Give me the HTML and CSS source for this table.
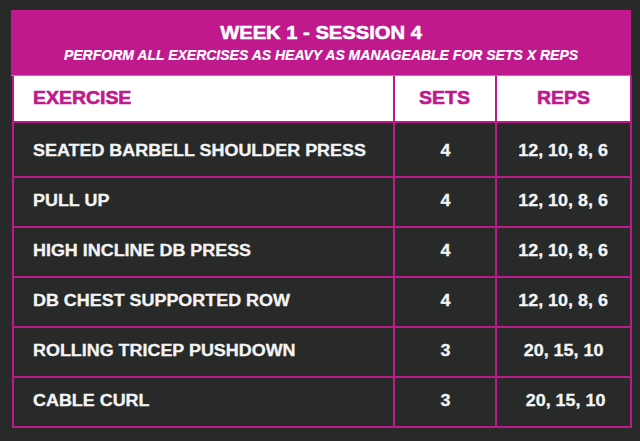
FILE: index.html
```html
<!DOCTYPE html>
<html lang="en">
<head>
<meta charset="utf-8">
<title>Week 1 - Session 4</title>
<link rel="stylesheet" href="styles.css">
</head>
<body>
<main class="sheet">
  <header class="banner">
    <h1 class="banner-title"><span class="wide">WEEK 1 - SESSION 4</span></h1>
    <p class="banner-sub">PERFORM ALL EXERCISES AS HEAVY AS MANAGEABLE FOR SETS X REPS</p>
  </header>
  <section class="grid">
    <div class="cell head left"><span class="wide">EXERCISE</span></div>
    <div class="cell head"><span class="wide">SETS</span></div>
    <div class="cell head"><span class="wide">REPS</span></div>

    <div class="cell body left first"><span class="wide">SEATED BARBELL SHOULDER PRESS</span></div>
    <div class="cell body first"><span class="wide">4</span></div>
    <div class="cell body first"><span class="wide">12, 10, 8, 6</span></div>

    <div class="cell body left"><span class="wide">PULL UP</span></div>
    <div class="cell body"><span class="wide">4</span></div>
    <div class="cell body"><span class="wide">12, 10, 8, 6</span></div>

    <div class="cell body left"><span class="wide">HIGH INCLINE DB PRESS</span></div>
    <div class="cell body"><span class="wide">4</span></div>
    <div class="cell body"><span class="wide">12, 10, 8, 6</span></div>

    <div class="cell body left"><span class="wide">DB CHEST SUPPORTED ROW</span></div>
    <div class="cell body"><span class="wide">4</span></div>
    <div class="cell body"><span class="wide">12, 10, 8, 6</span></div>

    <div class="cell body left"><span class="wide">ROLLING TRICEP PUSHDOWN</span></div>
    <div class="cell body"><span class="wide">3</span></div>
    <div class="cell body"><span class="wide">20, 15, 10</span></div>

    <div class="cell body left"><span class="wide">CABLE CURL</span></div>
    <div class="cell body"><span class="wide">3</span></div>
    <div class="cell body last-reps"><span class="wide">20, 15, 10</span></div>
  </section>
</main>
</body>
</html>
```
FILE: styles.css
```css
html, body {
  margin: 0;
  padding: 0;
}

body {
  background: #282929;
  width: 640px;
  height: 441px;
  overflow: hidden;
  font-family: "Liberation Sans", Arial, sans-serif;
  font-weight: bold;
}

.sheet {
  margin: 10px 0 0 11px;
  width: 621px;
}

.banner {
  box-sizing: border-box;
  width: 620px;
  height: 66px;
  background: #c0198e;
  border-bottom: 1px solid #8f8f8f;
  padding-top: 13px;
  color: #ffffff;
  text-align: center;
}

.banner-title {
  margin: 0;
  font-size: 18px;
  line-height: 20px;
  font-weight: bold;
  -webkit-text-stroke: 0.5px #ffffff;
}

.banner-sub {
  margin: 3.5px 0 0;
  font-size: 14px;
  line-height: 16px;
  font-style: italic;
  font-weight: bold;
  -webkit-text-stroke: 0.2px #ffffff;
}

.wide {
  display: inline-block;
  transform: scaleX(1.12);
  transform-origin: center center;
  white-space: nowrap;
}

.grid {
  margin-left: 1px;
  width: 620px;
  box-sizing: border-box;
  display: grid;
  grid-template-columns: 379px 100px 133px;
  grid-template-rows: 45px 53px repeat(5, 48px);
  gap: 2px;
  padding: 0 2px 2px 2px;
  background: #bb1a8b;
}

.cell {
  display: flex;
  align-items: center;
  justify-content: center;
  background: #282929;
  color: #f4f4f4;
  font-size: 16px;
  box-sizing: border-box;
  -webkit-text-stroke: 0.3px #f4f4f4;
}

.cell.left {
  justify-content: flex-start;
  padding-left: 19px;
}

.cell.left .wide {
  transform-origin: left center;
}

.cell.head {
  background: #ffffff;
  color: #c0198e;
  font-size: 18px;
  -webkit-text-stroke: 0.6px #c0198e;
}

.cell.head .wide {
  transform: scaleX(1.08);
}

.cell.body {
  padding-bottom: 2px;
}

.cell.body.first {
  padding-bottom: 0;
  padding-top: 3px;
}

.cell.last-reps {
  padding-left: 4px;
}
```
